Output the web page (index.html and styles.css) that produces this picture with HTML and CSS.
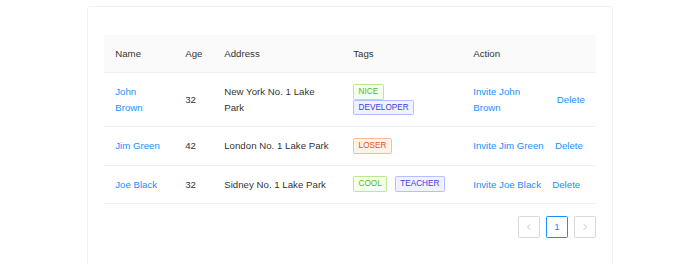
FILE: index.html
```html
<!DOCTYPE html>
<html>
<head>
<meta charset="utf-8">
<link rel="stylesheet" href="styles.css">
</head>
<body>
<div class="card">
  <table class="table">
    <colgroup>
      <col class="c-name"><col class="c-age"><col class="c-addr"><col class="c-tags"><col class="c-action">
    </colgroup>
    <thead>
      <tr><th>Name</th><th>Age</th><th>Address</th><th>Tags</th><th>Action</th></tr>
    </thead>
    <tbody>
      <tr>
        <td><a class="link">John Brown</a></td>
        <td>32</td>
        <td>New York No. 1 Lake Park</td>
        <td><span class="tag tag-green">NICE</span> <span class="tag tag-geek">DEVELOPER</span></td>
        <td><div class="space"><a class="link">Invite John Brown</a><a class="link">Delete</a></div></td>
      </tr>
      <tr>
        <td><a class="link">Jim Green</a></td>
        <td>42</td>
        <td>London No. 1 Lake Park</td>
        <td><span class="tag tag-volcano">LOSER</span></td>
        <td><div class="space"><a class="link">Invite Jim Green</a><a class="link">Delete</a></div></td>
      </tr>
      <tr>
        <td><a class="link">Joe Black</a></td>
        <td>32</td>
        <td>Sidney No. 1 Lake Park</td>
        <td><span class="tag tag-green">COOL</span> <span class="tag tag-geek">TEACHER</span></td>
        <td><div class="space"><a class="link">Invite Joe Black</a><a class="link">Delete</a></div></td>
      </tr>
    </tbody>
  </table>
  <ul class="pagination">
    <li class="page-item disabled">
      <svg width="8" height="8" viewBox="0 0 8 8"><path d="M5.2 1.2 L2.6 4 L5.2 6.8" fill="none" stroke="currentColor" stroke-width="0.9"/></svg>
    </li>
    <li class="page-item active">1</li>
    <li class="page-item disabled">
      <svg width="8" height="8" viewBox="0 0 8 8"><path d="M2.8 1.2 L5.4 4 L2.8 6.8" fill="none" stroke="currentColor" stroke-width="0.9"/></svg>
    </li>
  </ul>
</div>
</body>
</html>
```
FILE: styles.css
```css
html, body {
  margin: 0;
  padding: 0;
  background: #ffffff;
  overflow: hidden;
}
body {
  font-family: "Liberation Sans", Arial, sans-serif;
  font-size: 9.7px;
  line-height: 15.4px;
  color: rgba(0, 0, 0, 0.85);
}
.card {
  margin: 6px 0 0 87px;
  width: 526px;
  box-sizing: border-box;
  border: 1px solid #f0f0f0;
  border-radius: 3px;
  padding: 28px 16px 120px 16px;
}
.table {
  width: 492px;
  border-collapse: collapse;
  table-layout: fixed;
}
.c-name { width: 70px; }
.c-age { width: 39px; }
.c-addr { width: 129px; }
.c-tags { width: 120px; }
.c-action { width: 134px; }
.table th {
  background: #fafafa;
  font-weight: normal;
  text-align: left;
  padding: 11px 11.2px;
  border-bottom: 1px solid #f0f0f0;
  color: rgba(0, 0, 0, 0.85);
}
.table td {
  padding: 10.8px 11.2px;
  border-bottom: 1px solid #f0f0f0;
  vertical-align: middle;
}
.link {
  color: #1890ff;
  text-decoration: none;
}
.space {
  display: flex;
  align-items: center;
  gap: 11.2px;
}
.space .link:last-child {
  flex-shrink: 0;
}
.tag {
  display: inline-block;
  box-sizing: border-box;
  height: 15.4px;
  padding: 0 4.4px;
  font-size: 8.2px;
  line-height: 13.4px;
  border: 1px solid;
  border-radius: 1.4px;
  margin: 0 5px 0.3px 0;
  vertical-align: top;
}
.tag:last-child {
  margin-right: 0;
}
.tag-green {
  color: #4cbb17;
  background: #f6ffed;
  border-color: #b7eb8f;
}
.tag-geek {
  color: #3f3fe0;
  background: #f0f2ff;
  border-color: #b4bfff;
}
.tag-volcano {
  color: #f04a1f;
  background: #fff2e8;
  border-color: #ffbb96;
}
.pagination {
  list-style: none;
  margin: 12px 0 0 0;
  padding: 0;
  display: flex;
  justify-content: flex-end;
  gap: 5.6px;
}
.page-item {
  box-sizing: border-box;
  width: 22.4px;
  height: 22.4px;
  border: 1px solid #d9d9d9;
  border-radius: 1.4px;
  display: flex;
  align-items: center;
  justify-content: center;
  font-size: 9.7px;
}
.page-item.disabled {
  color: rgba(0, 0, 0, 0.25);
}
.page-item.active {
  border-color: #1890ff;
  color: #1890ff;
}
```
